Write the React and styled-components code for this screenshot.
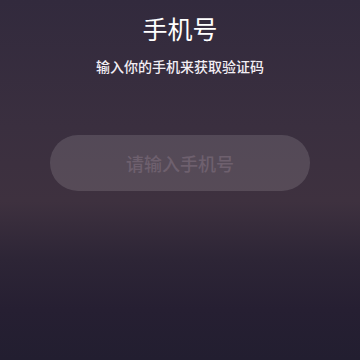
import styled, { createGlobalStyle } from "styled-components";

const GlobalStyle = createGlobalStyle`
  html, body {
    margin: 0;
    padding: 0;
  }
  body {
    font-family: "Noto Sans CJK SC", "Noto Sans", sans-serif;
  }
`;

function App() {
  return (
    <>
      <GlobalStyle />
      <Page>
        <Title>手机号</Title>
        <Subtitle>输入你的手机来获取验证码</Subtitle>
        <PhoneInput type="tel" placeholder="请输入手机号" />
      </Page>
    </>
  );
}

export default App;

const Page = styled.div`
  width: 360px;
  height: 360px;
  box-sizing: border-box;
  display: flex;
  flex-direction: column;
  align-items: center;
  padding-top: 11px;
  background: linear-gradient(
    180deg,
    #322a3d 0%,
    #3a2f3f 35%,
    #3e313f 56%,
    #2d2536 72%,
    #261f32 86%,
    #221e30 100%
  );
`;

const Title = styled.h1`
  margin: 0;
  font-size: 25px;
  line-height: 34px;
  font-weight: 400;
  color: #ffffff;
`;

const Subtitle = styled.p`
  margin: 11px 0 0;
  font-size: 14px;
  line-height: 20px;
  font-weight: 500;
  color: #f2eef4;
`;

const PhoneInput = styled.input`
  margin-top: 59px;
  width: 260px;
  height: 56px;
  box-sizing: border-box;
  border: none;
  outline: none;
  border-radius: 28px;
  background: rgba(255, 255, 255, 0.13);
  color: #ffffff;
  text-align: center;
  font-family: "Noto Sans CJK SC", "Noto Sans", sans-serif;
  font-size: 18px;
  font-weight: 500;

  &::placeholder {
    color: #6e606e;
  }
`;
